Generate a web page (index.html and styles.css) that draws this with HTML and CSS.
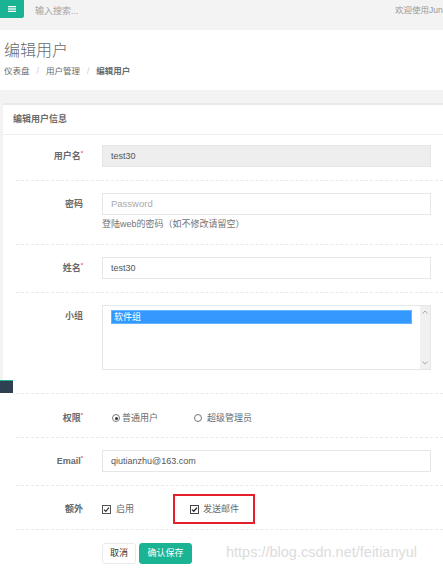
FILE: index.html
```html
<!DOCTYPE html>
<html>
<head>
<meta charset="utf-8">
<link rel="stylesheet" href="styles.css">
</head>
<body>
<div class="topbar">
  <div class="menu-btn">
    <svg width="8" height="6" viewBox="0 0 8 6"><rect x="0" y="0" width="8" height="1.3" fill="#fff"/><rect x="0" y="2.35" width="8" height="1.3" fill="#fff"/><rect x="0" y="4.7" width="8" height="1.3" fill="#fff"/></svg>
  </div>
  <div class="search">输入搜索...</div>
  <div class="welcome">欢迎使用Jun</div>
</div>

<div class="page-header">
  <h2 class="title">编辑用户</h2>
  <div class="crumbs"><span>仪表盘</span><span class="slash">/</span><span>用户管理</span><span class="slash">/</span><strong>编辑用户</strong></div>
</div>

<div class="wrapper">
  <div class="card">
    <div class="card-title">编辑用户信息</div>
    <div class="upper">
      <div class="row first">
        <label class="lbl">用户名<i>*</i></label>
        <div class="input disabled">test30</div>
      </div>
      <div class="sep"></div>
      <div class="row">
        <label class="lbl">密码</label>
        <div>
          <div class="input placeholder">Password</div>
          <div class="help">登陆web的密码（如不修改请留空）</div>
        </div>
      </div>
      <div class="sep"></div>
      <div class="row">
        <label class="lbl">姓名<i>*</i></label>
        <div class="input">test30</div>
      </div>
      <div class="sep"></div>
      <div class="row group-row">
        <label class="lbl">小组</label>
        <div class="listbox">
          <div class="options"><div class="opt">软件组</div></div>
          <div class="scroll">
            <svg width="6" height="4" viewBox="0 0 6 4"><path d="M0.5 3.5 L3 1 L5.5 3.5" fill="none" stroke="#aaa" stroke-width="1"/></svg>
            <svg width="6" height="4" viewBox="0 0 6 4"><path d="M0.5 0.5 L3 3 L5.5 0.5" fill="none" stroke="#aaa" stroke-width="1"/></svg>
          </div>
        </div>
      </div>
    </div>
    <div class="lower">
      <div class="sidebar-peek"></div>
      <div class="sep"></div>
      <div class="row radio-row">
        <label class="lbl">权限<i>*</i></label>
        <div class="choices">
          <span class="choice c1"><span class="radio on"></span>普通用户</span>
          <span class="choice c2"><span class="radio"></span>超级管理员</span>
        </div>
      </div>
      <div class="sep"></div>
      <div class="row">
        <label class="lbl">Email<i>*</i></label>
        <div class="input">qiutianzhu@163.com</div>
      </div>
      <div class="sep"></div>
      <div class="row check-row">
        <label class="lbl">额外</label>
        <div class="choices">
          <span class="choice k1"><svg class="cb" width="9" height="9" viewBox="0 0 9 9"><rect x="0.5" y="0.5" width="8" height="8" fill="#fff" stroke="#555"/><path d="M2 4.6 L3.8 6.3 L7 2.6" fill="none" stroke="#333" stroke-width="1.2"/></svg>启用</span>
          <span class="choice k2 marked"><svg class="cb" width="9" height="9" viewBox="0 0 9 9"><rect x="0.5" y="0.5" width="8" height="8" fill="#fff" stroke="#444"/><path d="M2 4.6 L3.8 6.3 L7 2.6" fill="none" stroke="#222" stroke-width="1.3"/></svg>发送邮件</span>
        </div>
      </div>
      <div class="sep"></div>
      <div class="row btn-row">
        <span></span>
        <div class="buttons">
          <button class="btn white">取消</button>
          <button class="btn primary">确认保存</button>
        </div>
      </div>
      <div class="watermark">https://blog.csdn.net/feitianyul</div>
    </div>
  </div>
</div>
</body>
</html>
```

FILE: styles.css
```css
* { box-sizing: border-box; margin: 0; padding: 0; }
html, body { width: 443px; height: 570px; overflow: hidden; }
body {
  font-family: "Liberation Sans", "Noto Sans CJK SC", sans-serif;
  font-size: 9px;
  color: #676a6c;
  background: #fff;
}

.topbar {
  height: 30px;
  background: #f3f3f4;
  display: flex;
  align-items: flex-start;
}
.menu-btn {
  flex: 0 0 24px;
  height: 18px;
  background: #1ab394;
  border-radius: 0 0 2px 0;
  display: flex;
  align-items: center;
  justify-content: center;
}
.search {
  flex: 1;
  margin-left: 11px;
  line-height: 22px;
  color: #a4a4a4;
}
.welcome {
  flex: 0 0 48px;
  white-space: nowrap;
  line-height: 21px;
  font-size: 8.5px;
  color: #999;
}

.page-header {
  height: 60px;
  padding: 11px 4px 0;
  background: #fff;
}
.title {
  font-size: 16px;
  line-height: 20px;
  font-weight: 300;
  color: #676a6c;
}
.crumbs {
  margin-top: 4px;
  line-height: 12px;
  font-size: 8.5px;
  color: #676a6c;
  display: flex;
}
.crumbs .slash { color: #ccc; margin: 0 7px; }
.crumbs strong { font-weight: 700; }

.wrapper {
  background: #f3f3f4;
  padding: 13px 0 0 3px;
  height: 480px;
}
.card {
  background: #fff;
  border-top: 2px solid #e7eaec;
}
.card-title {
  height: 30px;
  line-height: 29px;
  padding-left: 10px;
  font-weight: 700;
  color: #676a6c;
  border-bottom: 1px solid #eceef0;
}
.upper { padding-left: 13px; }
.lower {
  position: relative;
  margin-left: -3px;
  padding: 13px 0 0 16px;
  background: #fff;
  height: 200px;
}

.sep { border-top: 1px dashed #e7eaec; }

.row {
  display: grid;
  grid-template-columns: 70px 1fr;
  column-gap: 16px;
  padding: 12px 12px 13px 0;
}
.row.first { padding-top: 10px; }
.row.group-row { padding-bottom: 10px; }
.lbl {
  text-align: right;
  padding-right: 3px;
  line-height: 22px;
  font-weight: 700;
  color: #676a6c;
}
.lbl i {
  font-style: normal;
  color: #ed5565;
  font-size: 6px;
  vertical-align: top;
  line-height: 16px;
}

.input {
  height: 22px;
  border: 1px solid #e5e6e7;
  padding: 0 8px;
  line-height: 20px;
  color: #555;
  background: #fff;
}
.input.disabled { background: #eee; }
.input.placeholder { color: #a9a9a9; font-size: 9.5px; }
.help {
  margin-top: 2px;
  line-height: 14px;
  color: #737373;
}

.listbox {
  height: 65px;
  border: 1px solid #e5e6e7;
  display: flex;
  background: #fff;
}
.options { flex: 1; padding: 4px 8px 0 8px; }
.opt {
  background: #3399ff;
  color: #fff;
  line-height: 12px;
  padding-left: 2px;
  border: 1px solid #66b3ff;
}
.scroll {
  flex: 0 0 10px;
  background: #f0f0f0;
  display: flex;
  flex-direction: column;
  justify-content: space-between;
  align-items: center;
  padding: 4px 0;
}

.sidebar-peek {
  position: absolute;
  left: 0;
  top: 0;
  width: 13px;
  height: 13px;
  background: #2f4050;
  border-top: 1px solid #1ab394;
}

.radio-row { padding: 13px 12px 8px 0; }
.check-row { padding: 8px 12px 5px 0; align-items: center; }
.choices {
  display: flex;
  align-items: center;
  line-height: 22px;
  color: #676a6c;
}
.choice { display: inline-flex; align-items: center; }
.radio {
  width: 8px;
  height: 8px;
  border: 1px solid #777;
  border-radius: 50%;
  background: #fff;
  position: relative;
}
.radio.on::after {
  content: "";
  position: absolute;
  left: 1.5px;
  top: 1.5px;
  width: 3px;
  height: 3px;
  border-radius: 50%;
  background: #333;
}
.c1 { margin-left: 10px; gap: 2px; }
.c2 { margin-left: 36px; gap: 5px; }
.k1 { gap: 5px; }
.k2 { gap: 4px; margin-left: 39px; }
.marked {
  border: 2px solid #e4202a;
  height: 30px;
  padding: 0 14px 0 15px;
}

.btn-row { padding-top: 13px; }
.buttons { display: flex; gap: 3px; }
.btn {
  height: 21px;
  border-radius: 3px;
  font-family: "Liberation Sans", "Noto Sans CJK SC", sans-serif;
  font-size: 9px;
  line-height: 19px;
  cursor: pointer;
}
.btn.white {
  width: 34px;
  background: #fff;
  border: 1px solid #e7eaec;
  color: #333;
}
.btn.primary {
  width: 53px;
  background: #1ab394;
  border: 1px solid #1ab394;
  color: #fff;
}

.watermark {
  position: absolute;
  left: 226px;
  top: 164px;
  font-family: "Liberation Sans", Arial, sans-serif;
  font-size: 14.5px;
  color: #dcdcdc;
  white-space: nowrap;
}
```
